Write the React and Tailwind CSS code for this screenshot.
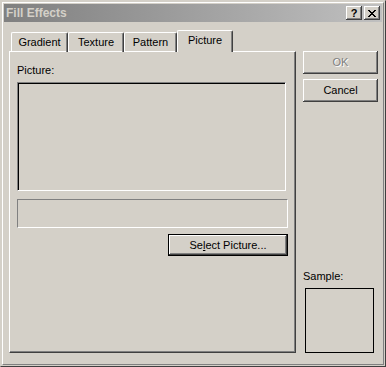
import React from 'react';

const raised =
  'shadow-[inset_-1px_-1px_#404040,inset_1px_1px_#ffffff,inset_-2px_-2px_#808080,inset_2px_2px_#d4d0c8]';

const tabs = [
  { label: 'Gradient', w: 'w-[57px]' },
  { label: 'Texture', w: 'w-[56px]' },
  { label: 'Pattern', w: 'w-[53px]' },
];

const App = () => {
  return (
    <div
      className="w-[386px] h-[367px] bg-[#d4d0c8] text-[11px] leading-none text-black p-px border border-t-[#d4d0c8] border-l-[#d4d0c8] border-b-[#404040] border-r-[#404040]"
      style={{ fontFamily: '"Liberation Sans", Arial, sans-serif' }}
    >
      <div className="h-full flex flex-col border border-t-white border-l-white border-b-[#808080] border-r-[#808080] p-px">
        {/* Title bar */}
        <div className="h-[18px] shrink-0 flex items-center bg-gradient-to-r from-[#808080] to-[#c0c0c0] pl-[2px] pr-[2px]">
          <span className="font-bold text-[#d4d0c8] text-[12px]">Fill Effects</span>
          <div className="ml-auto flex gap-[2px]">
            <div className={`w-[16px] h-[14px] bg-[#d4d0c8] ${raised} flex items-center justify-center font-bold text-[11px]`}>?</div>
            <div className={`w-[16px] h-[14px] bg-[#d4d0c8] ${raised} flex items-center justify-center`}>
              <svg width="8" height="7" viewBox="0 0 8 7">
                <path d="M0 0h2v1h1v1h2v-1h1v-1h2v1h-1v1h-1v1h-1v1h1v1h1v1h1v1h-2v-1h-1v-1h-2v1h-1v1h-2v-1h1v-1h1v-1h1v-1h-1v-1h-1v-1h-1z" fill="#000" />
              </svg>
            </div>
          </div>
        </div>

        {/* Body */}
        <div className="flex gap-[7px] pl-[5px] pt-[8px]">
          {/* Tabs + panel */}
          <div className="w-[287px] flex flex-col">
            <div className="h-[22px] flex items-end pl-[2px] relative z-10 -mb-px">
              {tabs.map((t) => (
                <div
                  key={t.label}
                  className={`${t.w} h-[20px] flex items-center justify-center border-t border-l border-r border-t-white border-l-white border-r-[#404040] rounded-t-[2px] shadow-[inset_-1px_0_#808080]`}
                >
                  {t.label}
                </div>
              ))}
              <div className="w-[56px] h-[22px] flex items-center justify-center pb-[2px] border-t border-l border-r border-t-white border-l-white border-r-[#404040] rounded-t-[2px] shadow-[inset_-1px_0_#808080] bg-[#d4d0c8]">
                Picture
              </div>
            </div>
            <div className="h-[302px] border border-t-white border-l-white border-b-[#404040] border-r-[#404040] shadow-[inset_-1px_-1px_#808080] pl-[7px] pt-[13px] flex flex-col">
              <div>Picture:</div>
              <div className="mt-[6px] w-[269px] h-[109px] border border-t-[#808080] border-l-[#808080] border-b-white border-r-white shadow-[inset_1px_1px_#000000]"></div>
              <div className="mt-[8px] w-[271px] h-[29px] border border-t-[#808080] border-l-[#808080] border-b-white border-r-white"></div>
              <div className="mt-[6px] flex justify-end w-[271px]">
                <div className={`w-[120px] h-[22px] border border-black ${raised} flex items-center justify-center`}>
                  <span>
                    Se<span className="underline">l</span>ect Picture...
                  </span>
                </div>
              </div>
            </div>
          </div>

          {/* Right column */}
          <div className="w-[75px] flex flex-col pt-[21px]">
            <div className={`h-[23px] ${raised} flex items-center justify-center text-[#808080] [text-shadow:1px_1px_#ffffff]`}>OK</div>
            <div className={`mt-[5px] h-[23px] ${raised} flex items-center justify-center`}>Cancel</div>
            <div className="mt-[169px] pl-[0px]">Sample:</div>
            <div className="mt-[6px] ml-[2px] w-[69px] h-[65px] border border-black"></div>
          </div>
        </div>
      </div>
    </div>
  );
};

export default App;
